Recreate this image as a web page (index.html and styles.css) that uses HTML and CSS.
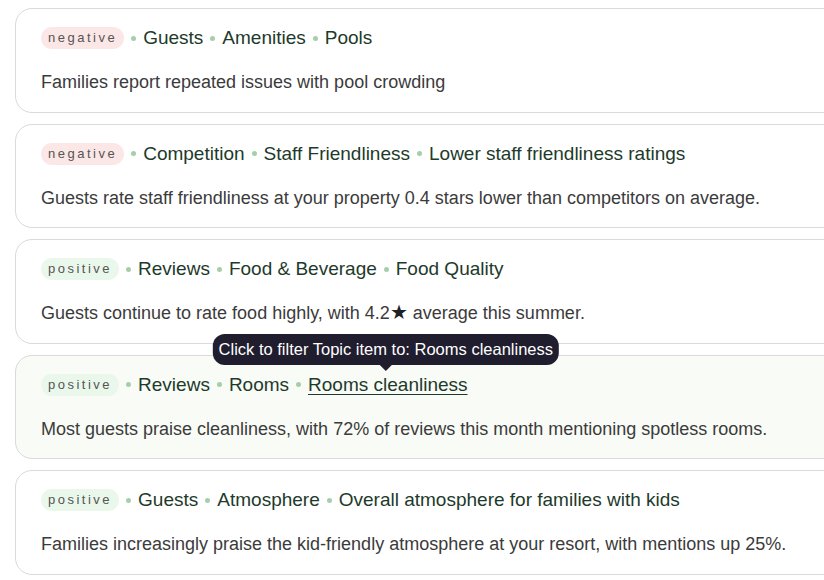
FILE: index.html
```html
<!DOCTYPE html>
<html>
<head>
<meta charset="utf-8">
<link rel="stylesheet" href="styles.css">
</head>
<body>
<div class="list">
  <div class="card">
    <div class="meta">
      <span class="badge neg">negative</span>
      <span class="dot"></span><span class="topic">Guests</span>
      <span class="dot"></span><span class="topic">Amenities</span>
      <span class="dot"></span><span class="topic">Pools</span>
    </div>
    <p class="text">Families report repeated issues with pool crowding</p>
  </div>
  <div class="card">
    <div class="meta">
      <span class="badge neg">negative</span>
      <span class="dot"></span><span class="topic">Competition</span>
      <span class="dot"></span><span class="topic">Staff Friendliness</span>
      <span class="dot"></span><span class="topic">Lower staff friendliness ratings</span>
    </div>
    <p class="text">Guests rate staff friendliness at your property 0.4 stars lower than competitors on average.</p>
  </div>
  <div class="card">
    <div class="meta">
      <span class="badge pos">positive</span>
      <span class="dot"></span><span class="topic">Reviews</span>
      <span class="dot"></span><span class="topic">Food &amp; Beverage</span>
      <span class="dot"></span><span class="topic">Food Quality</span>
    </div>
    <p class="text">Guests continue to rate food highly, with 4.2<span class="star">★</span> average this summer.</p>
  </div>
  <div class="card hover">
    <div class="meta">
      <span class="badge pos">positive</span>
      <span class="dot"></span><span class="topic">Reviews</span>
      <span class="dot"></span><span class="topic">Rooms</span>
      <span class="dot"></span><span class="topic link">Rooms cleanliness<span class="tooltip">Click to filter Topic item to: Rooms cleanliness</span></span>
    </div>
    <p class="text">Most guests praise cleanliness, with 72% of reviews this month mentioning spotless rooms.</p>
  </div>
  <div class="card">
    <div class="meta">
      <span class="badge pos">positive</span>
      <span class="dot"></span><span class="topic">Guests</span>
      <span class="dot"></span><span class="topic">Atmosphere</span>
      <span class="dot"></span><span class="topic">Overall atmosphere for families with kids</span>
    </div>
    <p class="text">Families increasingly praise the kid-friendly atmosphere at your resort, with mentions up 25%.</p>
  </div>
</div>
</body>
</html>
```

FILE: styles.css
```css
html, body {
  margin: 0;
  padding: 0;
  background: #ffffff;
  overflow: hidden;
}
body {
  font-family: "Liberation Sans", Arial, sans-serif;
  width: 824px;
  height: 580px;
}
.list {
  display: flex;
  flex-direction: column;
  gap: 11px;
  padding: 8px 0 0 15px;
  width: 860px;
}
.card {
  border: 1px solid #d9d9de;
  border-radius: 17px;
  background: #ffffff;
  height: 104.5px;
  box-sizing: border-box;
  padding: 18px 25px 0 25px;
}
.card.hover {
  background: #f9fbf6;
}
.meta {
  display: flex;
  align-items: center;
  height: 22px;
  color: #1d3a2b;
  font-size: 19px;
}
.badge {
  display: inline-block;
  font-size: 13px;
  letter-spacing: 2.5px;
  color: #555555;
  padding: 3px 7px 4px 7px;
  border-radius: 11px;
  line-height: 15px;
  margin-right: 7px;
}
.badge.neg { background: #fbe7e6; }
.badge.pos { background: #eaf7eb; }
.dot {
  width: 5px;
  height: 5px;
  border-radius: 50%;
  background: #a6cfa9;
  margin: 0 7px 0 0;
}
.topic {
  white-space: nowrap;
  position: relative;
  margin-right: 7px;
}
.link {
  text-decoration: underline;
  text-underline-offset: 3px;
  text-decoration-thickness: 1px;
}
.tooltip {
  position: absolute;
  bottom: 100%;
  left: 50%;
  transform: translateX(-50%);
  margin-bottom: 9px;
  margin-left: -2px;
  background: #1f1d2e;
  color: #ffffff;
  font-size: 16.5px;
  padding: 5px 6px 6px 6px;
  border-radius: 12px;
  white-space: nowrap;
  line-height: 20px;
  text-decoration: none;
}
.tooltip::after {
  content: "";
  position: absolute;
  top: 100%;
  left: 50%;
  margin-left: -6px;
  border-left: 6px solid transparent;
  border-right: 6px solid transparent;
  border-top: 6px solid #1f1d2e;
}
.text {
  margin: 21px 0 0 0;
  font-size: 18px;
  line-height: 24px;
  color: #3b3b3b;
}
.star {
  font-family: "DejaVu Sans", sans-serif;
  font-size: 20px;
  line-height: 18px;
  color: #1f1f28;
}
```
